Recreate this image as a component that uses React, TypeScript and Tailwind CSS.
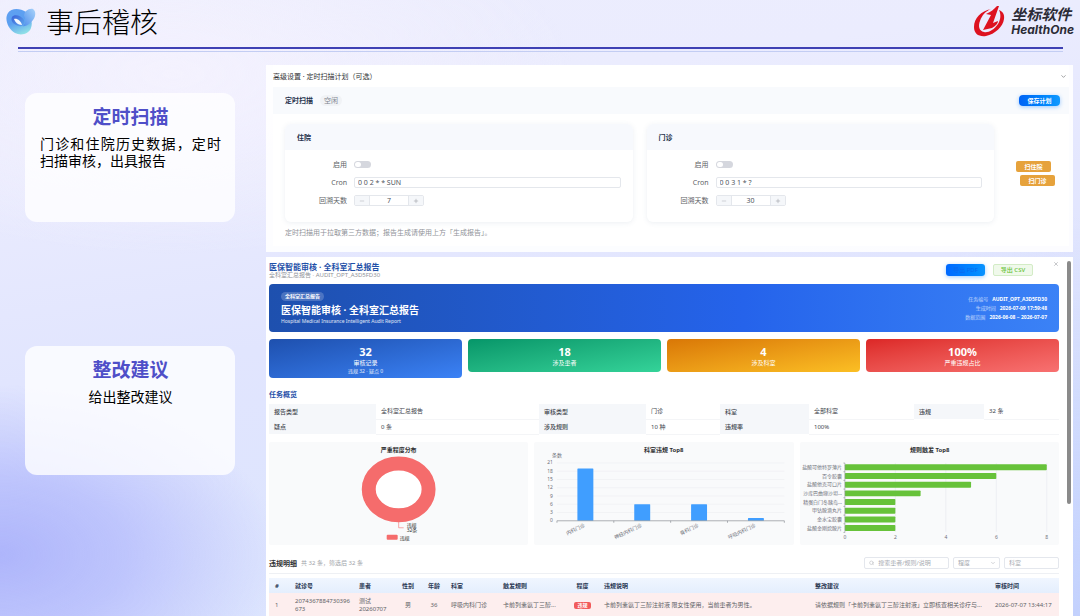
import React from 'react'
import { ChevronDown, Minus, Plus, Search, X } from 'lucide-react'

interface IPlan {
  id: string
  title: string
  cron: string
  days: number
}

const plans: IPlan[] = [
  { id: 'inpatient', title: '住院', cron: '0 0 2 * * SUN', days: 7 },
  { id: 'outpatient', title: '门诊', cron: '0 0 3 1 * ?', days: 30 },
]

const stats = [
  { value: '32', label: '审核记录', extra: '违规 32 · 疑点 0', color: 'from-[#1e50ae] to-[#3b82f6]' },
  { value: '18', label: '涉及患者', color: 'from-[#059669] to-[#34d399]' },
  { value: '4', label: '涉及科室', color: 'from-[#d97706] to-[#fbbf24]' },
  { value: '100%', label: '严重违规占比', color: 'from-[#dc2626] to-[#f87171]' },
]

const yTicks = [0, 3, 6, 9, 12, 15, 18, 21]

const departments = [
  { name: '内科门诊', count: 19 },
  { name: '神经内科门诊', count: 6 },
  { name: '骨科门诊', count: 6 },
  { name: '呼吸内科门诊', count: 1 },
]

const rules = [
  { name: '盐酸可他特罗薄片', count: 8 },
  { name: '百令胶囊', count: 6 },
  { name: '盐酸他克可口片', count: 5 },
  { name: '沙库巴曲缬沙坦…', count: 3 },
  { name: '精蛋白门冬胰岛…', count: 2 },
  { name: '甲钴胺滴丸片', count: 2 },
  { name: '金水宝胶囊', count: 2 },
  { name: '盐酸金刚烷胺片', count: 2 },
]

const BrandMark = () => (
  <svg viewBox="0 0 30 28" className="h-7 w-[30px]" aria-hidden="true">
    <defs>
      <linearGradient id="blobA" x1="0.2" y1="0" x2="0.6" y2="1">
        <stop offset="0" stopColor="#5fa0f2" />
        <stop offset="0.5" stopColor="#5b9ff0" />
        <stop offset="1" stopColor="#8fe0e6" />
      </linearGradient>
      <linearGradient id="blobB" x1="0" y1="1" x2="1" y2="0">
        <stop offset="0" stopColor="#4f8fec" />
        <stop offset="1" stopColor="#a9d3fa" />
      </linearGradient>
      <linearGradient id="blobC" x1="0" y1="0" x2="1" y2="1">
        <stop offset="0" stopColor="#3a63d8" />
        <stop offset="1" stopColor="#5fa8ee" />
      </linearGradient>
    </defs>
    <path d="M2 5C5 0 14 0 20 4C25 8 27 14 25 20C23 26 15 28 9 25C2 21 -2 11 2 5Z" fill="url(#blobA)" />
    <path d="M18 8C18 3 23 0 27 1C30 3 30 8 27 12C24 16 19 19 17 18C20 14 20 11 18 8Z" fill="url(#blobB)" />
    <path d="M6 9C8 6 15 7 18 12C20 16 17 19 13 18C8 17 4 13 6 9Z" fill="url(#blobC)" />
    <path d="M8 11C11 10 15 13 16 17C12 17 9 14 8 11Z" fill="#f4f8ff" />
  </svg>
)

const CompanyLogo = () => (
  <div className="flex items-center gap-[6px]">
    <svg viewBox="0 0 32 31" className="h-[31px] w-8" aria-hidden="true">
      <path
        d="M18 3C8 5 1 12 1 21C1 28 6 31 13 30C22 28 30 21 31 13C32 8 29 5 26 4C28 8 28 13 25 18C21 24 15 27 11 26C6 25 5 20 7 15C9 9 13 5 18 3Z"
        fill="#dd1220"
      />
      <path d="M24 0C21 3 18 6 13 8L18 9L10 24L19 22C23 20 25 17 25 15L20 17L26 0Z" fill="#dd1220" />
    </svg>
    <div className="flex flex-col gap-[2px] text-[#2b2b36]">
      <span className="text-[15px] font-bold italic leading-[15px]">坐标软件</span>
      <span className="text-[12px] font-bold italic leading-3 [font-family:Inter,sans-serif]">HealthOne</span>
    </div>
  </div>
)

const NoteCard: React.FC<{ title: string; children: React.ReactNode }> = ({ title, children }) => (
  <article className="h-[129px] rounded-xl bg-white/80 pl-[15px] pr-[14px] pt-3">
    <h2 className="text-center text-[19px] font-bold leading-6 text-[#4f4fc8]">{title}</h2>
    {children}
  </article>
)

const PlanCard: React.FC<{ plan: IPlan }> = ({ plan }) => (
  <section className="flex-1 rounded-md bg-white shadow-[0_1px_5px_rgba(100,120,160,0.12)]">
    <h4 className="flex h-[26px] items-center rounded-t-md bg-[#f7f9fd] pl-3 text-[7px] font-bold text-[#26334d]">
      {plan.title}
    </h4>
    <div className="grid auto-rows-[11px] grid-cols-[62px_1fr] items-center gap-[7px] pb-4 pr-3 pt-[9px] text-[7px] text-[#606266]">
      <label htmlFor={`${plan.id}-on`} className="text-right">启用</label>
      <input
        id={`${plan.id}-on`}
        type="checkbox"
        role="switch"
        className="h-[7px] w-[17px] appearance-none rounded-full bg-[#d5d7de] before:m-px before:block before:h-[5px] before:w-[6px] before:rounded-full before:bg-white"
      />
      <label htmlFor={`${plan.id}-cron`} className="text-right">Cron</label>
      <input
        id={`${plan.id}-cron`}
        defaultValue={plan.cron}
        className="h-[11px] w-full min-w-0 rounded-xs border border-[#e4e7ec] bg-white px-[3px] text-[7px] leading-none text-[#50545c]"
      />
      <label htmlFor={`${plan.id}-days`} className="text-right">回溯天数</label>
      <div className="flex h-[11px] w-[70px] rounded-xs border border-[#e4e7ec]">
        <button aria-label="减少" className="flex w-[14px] items-center justify-center bg-[#f5f7fa] text-[#a8abb2]">
          <Minus size={6} />
        </button>
        <input
          id={`${plan.id}-days`}
          defaultValue={plan.days}
          className="w-0 min-w-0 flex-1 border-x border-[#e4e7ec] bg-white text-center text-[7px] leading-none text-[#50545c]"
        />
        <button aria-label="增加" className="flex w-[14px] items-center justify-center bg-[#f5f7fa] text-[#909399]">
          <Plus size={6} />
        </button>
      </div>
    </div>
  </section>
)

const SchedulePanel = () => (
  <section className="bg-white/90 pb-[6px] pl-[7px] pr-1">
    <div className="flex h-[22px] items-center justify-between bg-white pr-[2px] text-[7px] text-[#303133]">
      <h3>高级设置 · 定时扫描计划（可选）</h3>
      <ChevronDown size={7} className="text-[#606266]" />
    </div>
    <div className="flex h-[27px] items-center bg-[#f8fafd] pl-3 pr-[9px]">
      <h3 className="text-[7px] font-bold text-[#26334d]">定时扫描</h3>
      <span className="ml-[7px] rounded-full bg-[#f1f3f6] px-1 py-[2px] text-[7px] text-[#808590]">空闲</span>
      <button className="ml-auto h-[11px] w-[41px] rounded-[4px] bg-gradient-to-r from-[#0062f5] to-[#1199ff] text-[6px] font-bold text-white shadow-[0_1px_4px_rgba(20,130,255,0.4)]">
        保存计划
      </button>
    </div>
    <div className="bg-white pb-[9px] pl-3 pt-[10px]">
      <div className="flex">
        <div className="flex flex-1 gap-[14px]">
          {plans.map(plan => <PlanCard key={plan.id} plan={plan} />)}
        </div>
        <div className="flex w-[75px] flex-col items-start gap-[3px] pl-[22px] pt-[37px] text-[6px] font-bold text-white">
          <button className="h-[11px] w-[35px] rounded-xs bg-[#e6a23c]">扫住院</button>
          <button className="ml-1 h-[11px] w-[35px] rounded-xs bg-[#e6a23c]">扫门诊</button>
        </div>
      </div>
      <p className="mt-[7px] text-[7px] leading-[8px] text-[#909399]">
        定时扫描用于拉取第三方数据；报告生成请使用上方「生成报告」。
      </p>
    </div>
  </section>
)

const Banner = () => (
  <div className="flex h-12 items-center justify-between rounded-[4px] bg-gradient-to-r from-[#1e50ae] via-[#2563eb] via-60% to-[#3b82f6] px-3 text-white">
    <div className="flex flex-col items-start">
      <span className="rounded-full bg-white/20 px-1 py-px text-[5px] font-bold leading-[7px]">全科室汇总报告</span>
      <h3 className="mt-[3px] text-[10px] font-bold leading-3">医保智能审核 · 全科室汇总报告</h3>
      <p className="mt-[2px] text-[5px] leading-[6px] text-white/85">Hospital Medical Insurance Intelligent Audit Report</p>
    </div>
    <dl className="grid grid-cols-1 gap-px text-right text-[5px] leading-[8px]">
      <div className="flex justify-end gap-1">
        <dt className="text-white/65">任务编号</dt>
        <dd className="font-bold">AUDIT_OPT_A3D5FD30</dd>
      </div>
      <div className="flex justify-end gap-1">
        <dt className="text-white/65">生成时间</dt>
        <dd className="font-bold">2026-07-09 17:59:48</dd>
      </div>
      <div className="flex justify-end gap-1">
        <dt className="text-white/65">数据范围</dt>
        <dd className="font-bold">2026-06-08 ~ 2026-07-07</dd>
      </div>
    </dl>
  </div>
)

const Overview = () => {
  const th = 'h-[15px] bg-[#f5f7fa] pl-[5px] text-left font-medium'
  const td = 'h-[15px] border-b border-[#f4f5f7] pl-[5px]'

  return (
    <table className="w-full table-fixed border-collapse text-[6px] leading-[8px] text-[#40444c]">
      <colgroup>
        <col className="w-[107px]" />
        <col />
        <col className="w-[107px]" />
        <col className="w-[74px]" />
        <col className="w-[89px]" />
        <col className="w-[105px]" />
        <col className="w-[70px]" />
        <col className="w-[75px]" />
      </colgroup>
      <tbody>
        <tr>
          <th className={th}>报告类型</th>
          <td className={td}>全科室汇总报告</td>
          <th className={th}>审核类型</th>
          <td className={td}>门诊</td>
          <th className={th}>科室</th>
          <td className={td}>全部科室</td>
          <th className={th}>违规</th>
          <td className={td}>32 条</td>
        </tr>
        <tr>
          <th className={th}>疑点</th>
          <td className={td}>0 条</td>
          <th className={th}>涉及规则</th>
          <td className={td}>10 种</td>
          <th className={th}>违规率</th>
          <td className={td} colSpan={3}>100%</td>
        </tr>
      </tbody>
    </table>
  )
}

const DonutChart = () => (
  <svg viewBox="0 0 260 104" className="block w-full rounded-xs bg-[#f9fafb]" role="img" aria-label="严重程度分布">
    <text x="130" y="10" fontSize="6" fontWeight="700" textAnchor="middle" fill="#303133">严重程度分布</text>
    <ellipse cx="130" cy="47.5" rx="30" ry="26" fill="#fff" stroke="#f56c6c" strokeWidth="14" />
    <path d="M130 80V86H135" fill="none" stroke="#f56c6c" strokeWidth="0.6" />
    <text x="138" y="85" fontSize="5" fill="#303133">违规</text>
    <text x="138" y="90" fontSize="5" fill="#303133">32条</text>
    <rect x="118" y="93" width="11" height="5" rx="1" fill="#f56c6c" />
    <text x="131" y="98" fontSize="5" fill="#303133">违规</text>
  </svg>
)

const DepartmentChart = () => (
  <svg viewBox="0 0 260 104" className="block w-full rounded-xs bg-[#f9fafb]" role="img" aria-label="科室违规 Top8">
    <text x="130" y="10" fontSize="6" fontWeight="700" textAnchor="middle" fill="#303133">科室违规 Top8</text>
    <text x="23" y="15" fontSize="5" textAnchor="middle" fill="#6e7079">条数</text>
    {yTicks.map(t => {
      const y = 79 - t * 2.76
      return (
        <g key={t}>
          {t > 0 && <line x1="23" x2="251" y1={y} y2={y} stroke="#eceef2" strokeWidth="0.6" />}
          <text x="19" y={y + 1.5} fontSize="5" textAnchor="end" fill="#6e7079">{t}</text>
        </g>
      )
    })}
    {departments.map((d, i) => {
      const cx = 51.5 + i * 57
      const h = d.count * 2.76
      return (
        <g key={d.name}>
          <rect x={cx - 8} y={79 - h} width="16" height={h} rx="0.6" fill="#409eff" />
          <text x={cx} y="85" fontSize="5" textAnchor="end" fill="#6e7079" transform={`rotate(-25 ${cx} 85)`}>{d.name}</text>
        </g>
      )
    })}
    <path d="M23 81V79H251V81M80 79V81M137 79V81M194 79V81" fill="none" stroke="#8b8e96" strokeWidth="0.7" />
  </svg>
)

const RuleChart = () => (
  <svg viewBox="0 0 260 104" className="block w-full rounded-xs bg-[#f9fafb]" role="img" aria-label="规则触发 Top8">
    <text x="130" y="10" fontSize="6" fontWeight="700" textAnchor="middle" fill="#303133">规则触发 Top8</text>
    {[0, 2, 4, 6, 8].map(t => (
      <g key={t}>
        {t > 0 && <line x1={45 + t * 25.3} x2={45 + t * 25.3} y1="21" y2="90" stroke="#e6e8ee" strokeWidth="0.6" />}
        <text x={45 + t * 25.3} y="97" fontSize="5" textAnchor="middle" fill="#6e7079">{t}</text>
      </g>
    ))}
    {rules.map((r, i) => {
      const y = 25.4 + i * 8.7
      return (
        <g key={r.name}>
          <text x="42" y={y + 1.6} fontSize="5" textAnchor="end" fill="#6e7079">{r.name}</text>
          <line x1="43.500" x2="45" y1={y - 4.3} y2={y - 4.3} stroke="#8b8e96" strokeWidth="0.6" />
          <rect x="45" y={y - 3} width={r.count * 25.3} height="6" rx="0.8" fill="#67c23a" />
        </g>
      )
    })}
    <path d="M45 21V90.700H43.500" fill="none" stroke="#8b8e96" strokeWidth="0.6" />
  </svg>
)

const DetailTable = () => (
  <table className="w-full table-fixed border-collapse text-left text-[6px] leading-[8px] text-[#606266]">
    <colgroup>
      <col className="w-5" />
      <col className="w-16" />
      <col className="w-[42px]" />
      <col className="w-[26px]" />
      <col className="w-[26px]" />
      <col className="w-[50px]" />
      <col className="w-[70px]" />
      <col className="w-[31px]" />
      <col />
      <col className="w-[180px]" />
      <col className="w-[70px]" />
    </colgroup>
    <thead>
      <tr className="h-[15px] bg-gradient-to-b from-[#f0f6ff] to-[#e4eefd] font-bold text-[#2c3a55]">
        <th className="pl-[6px]">#</th>
        <th className="pl-[6px]">就诊号</th>
        <th className="pl-[6px]">患者</th>
        <th className="text-center">性别</th>
        <th className="text-center">年龄</th>
        <th className="pl-1">科室</th>
        <th className="pl-[6px]">触发规则</th>
        <th className="text-center">程度</th>
        <th className="pl-[6px]">违规说明</th>
        <th className="pl-[6px]">整改建议</th>
        <th className="pl-[6px]">审核时间</th>
      </tr>
    </thead>
    <tbody>
      <tr className="h-[23px] bg-[#fdeeee]">
        <td className="pl-[6px]">1</td>
        <td className="break-all pl-[6px] pr-[2px]">2074367884730396673</td>
        <td className="pl-[6px]">测试<br />20260707</td>
        <td className="text-center">男</td>
        <td className="text-center">36</td>
        <td className="truncate pl-1">呼吸内科门诊</td>
        <td className="pl-[6px]">卡前列素氨丁三醇...</td>
        <td className="text-center">
          <span className="inline-block h-[7px] w-[17px] rounded-xs bg-[#f15b5b] text-[5px] font-bold leading-[7px] text-white">违规</span>
        </td>
        <td className="truncate pl-[6px]">卡前列素氨丁三醇注射液 限女性使用，当前患者为男性。</td>
        <td className="truncate pl-[6px]">请依据规则「卡前列素氨丁三醇注射液」立即核查相关诊疗与...</td>
        <td className="whitespace-nowrap pl-[6px]">2026-07-07 13:44:17</td>
      </tr>
    </tbody>
  </table>
)

const ReportPanel = () => (
  <section className="flex flex-1 bg-white pl-[3px]">
    <div className="min-w-0 flex-1">
      <header className="flex items-start pt-[5px]">
        <div className="h-[22px]">
          <h2 className="text-[8px] font-bold leading-[9px] text-[#1e50a8]">医保智能审核 · 全科室汇总报告</h2>
          <p className="text-[6px] leading-[8px] text-[#909399]">全科室汇总报告 · AUDIT_OPT_A3D5FD30</p>
        </div>
        <div className="ml-auto flex gap-2 pr-[26px] pt-[2px]">
          <button className="h-3 w-[39px] rounded-[3px] bg-gradient-to-r from-[#0068ff] to-[#0a93ff] text-[6px] text-[#0b68ee] shadow-[0_1px_4px_rgba(20,130,255,0.4)]">
            导出 PDF
          </button>
          <button className="h-3 w-10 rounded-[2px] border border-[#d3ecc6] bg-[#f0f9eb] text-[6px] font-medium leading-none text-[#67c23a]">
            导出 CSV
          </button>
        </div>
      </header>
      <Banner />
      <div className="mt-[7px] grid h-10 grid-cols-4 items-start gap-[6px]">
        {stats.map(s => (
          <div key={s.label} className={`rounded-[4px] bg-gradient-to-br pb-1 pt-[7px] text-center text-white ${s.color}`}>
            <div className="text-[11px] font-bold leading-3">{s.value}</div>
            <div className="mt-px text-[6px] leading-[9px]">{s.label}</div>
            {s.extra && <div className="text-[5px] leading-[6px] text-white/85">{s.extra}</div>}
          </div>
        ))}
      </div>
      <h3 className="mb-1 mt-[11px] text-[7px] font-bold leading-[10px] text-[#1e50a8]">任务概览</h3>
      <Overview />
      <div className="mt-[7px] grid grid-cols-3 gap-[6px]">
        <DonutChart />
        <DepartmentChart />
        <RuleChart />
      </div>
      <div className="mb-1 mt-2 flex items-center border-b border-[#eef0f4] pb-1 pt-1 text-[6px]">
        <h3 className="text-[7px] font-bold text-[#303133]">违规明细</h3>
        <span className="ml-1 text-[#a0a3a9]">共 32 条，筛选后 32 条</span>
        <div className="ml-auto flex h-3 gap-1">
          <label className="flex w-[85px] items-center gap-1 rounded-xs border border-[#e4e7ed] px-1 text-[#a8abb2]">
            <Search size={6} />
            <input aria-label="搜索" placeholder="搜索患者/规则/说明" className="w-full min-w-0 leading-none placeholder:text-[#a8abb2]" />
          </label>
          <div className="grid w-[47px] items-center">
            <select aria-label="程度" className="col-start-1 row-start-1 h-full w-full appearance-none rounded-xs border border-[#e4e7ed] px-1 leading-none text-[#a8abb2]">
              <option>程度</option>
            </select>
            <ChevronDown size={6} className="pointer-events-none col-start-1 row-start-1 mr-1 justify-self-end text-[#a8abb2]" />
          </div>
          <input aria-label="科室" placeholder="科室" className="w-[55px] rounded-xs border border-[#e4e7ed] px-1 leading-none placeholder:text-[#a8abb2]" />
        </div>
      </div>
      <DetailTable />
    </div>
    <div className="flex w-[14px] flex-col items-end pr-[2px] pt-1">
      <div className="h-[243px] w-1 rounded-full bg-[#8a8a8a]" />
    </div>
  </section>
)

const App: React.FC = () => {
  return (
    <div className="flex min-h-screen flex-col bg-[radial-gradient(ellipse_280px_170px_at_0%_90%,#aeb5fb_0%,#b6bdfccc_45%,#c8d2fd00_100%),radial-gradient(ellipse_300px_400px_at_100%_100%,#c3d1fd_0%,#c3d1fd00_100%),radial-gradient(ellipse_400px_180px_at_16%_12%,#f4f2fe_0%,#f4f2fe00_100%),linear-gradient(172deg,#ecedfd_0%,#ebecfe_20%,#e1e5fe_50%,#dae4fe_100%)] font-['Noto_Sans','Noto_Sans_CJK_SC',sans-serif] leading-none">
      <header className="flex h-[47px] items-center justify-between pb-1 pl-[6px] pr-[6px]">
        <div className="flex items-center gap-[10px]">
          <BrandMark />
          <h1 className="text-[28px] font-light leading-8 text-black">事后稽核</h1>
        </div>
        <CompanyLogo />
      </header>
      <div className="ml-[18px] mr-[17px] h-[5px] border-b border-t-2 border-b-[#c3cdf3] border-t-[#3f41b4]" />

      <main className="flex flex-1 gap-[31px] pl-[25px] pr-[7px] pt-[13px]">
        <aside className="flex w-[210px] shrink-0 flex-col gap-[124px] pt-7">
          <NoteCard title="定时扫描">
            <p className="mt-[6px] text-justify text-[14px] leading-[17px] text-black">门诊和住院历史数据，定时扫描审核，出具报告</p>
          </NoteCard>
          <NoteCard title="整改建议">
            <p className="mt-[6px] text-center text-[14px] leading-[17px] text-black">给出整改建议</p>
          </NoteCard>
        </aside>
        <div className="flex min-w-0 flex-1 flex-col gap-[5px]">
          <SchedulePanel />
          <div className="relative flex flex-1">
            <ReportPanel />
            <button aria-label="关闭" className="absolute right-[14px] top-1 text-[#909399]">
              <X size={6} />
            </button>
          </div>
        </div>
      </main>
    </div>
  )
}

export default App
